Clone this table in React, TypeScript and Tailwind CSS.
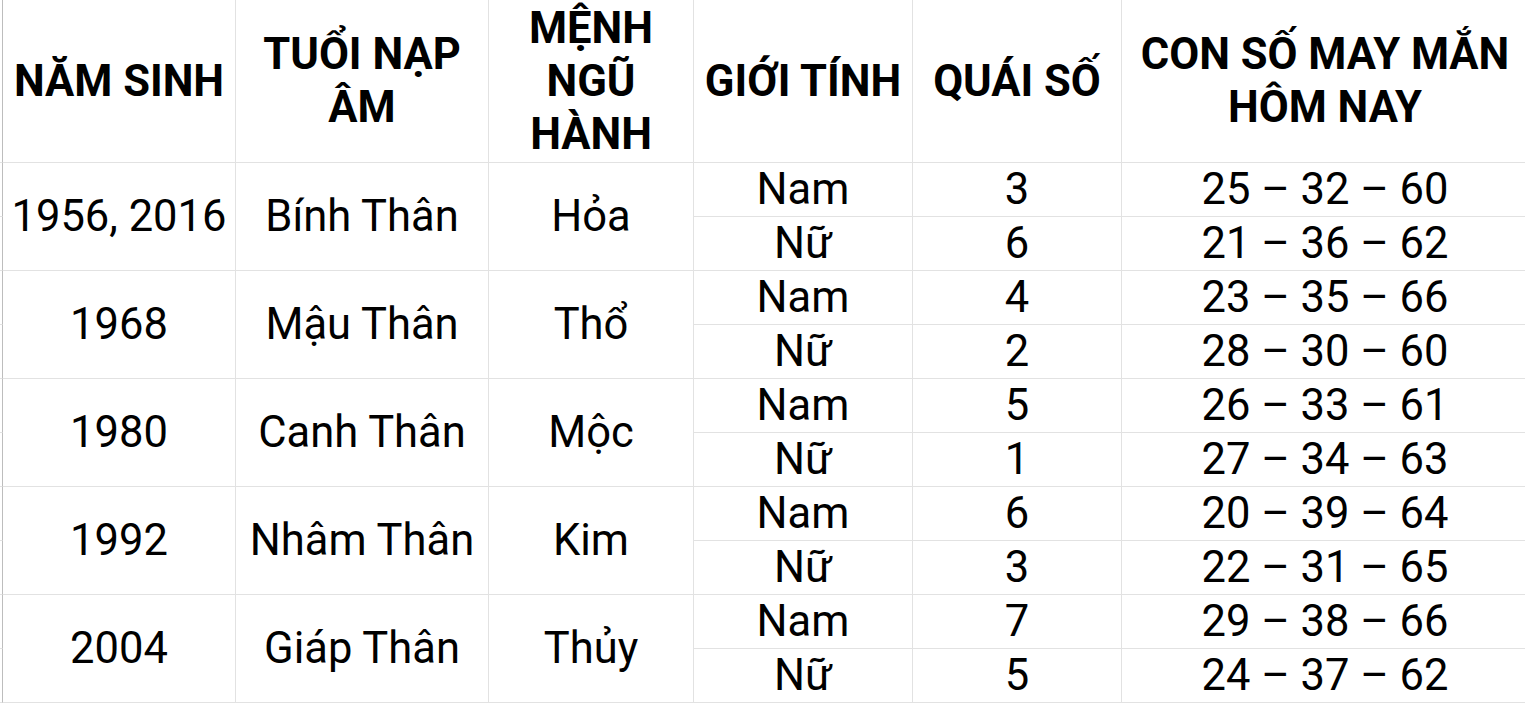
import React from "react";

type Group = {
  year: string;
  tuoi: string;
  menh: string;
  rows: { gender: string; quai: string; lucky: string }[];
};

const groups: Group[] = [
  {
    year: "1956, 2016",
    tuoi: "Bính Thân",
    menh: "Hỏa",
    rows: [
      { gender: "Nam", quai: "3", lucky: "25 – 32 – 60" },
      { gender: "Nữ", quai: "6", lucky: "21 – 36 – 62" },
    ],
  },
  {
    year: "1968",
    tuoi: "Mậu Thân",
    menh: "Thổ",
    rows: [
      { gender: "Nam", quai: "4", lucky: "23 – 35 – 66" },
      { gender: "Nữ", quai: "2", lucky: "28 – 30 – 60" },
    ],
  },
  {
    year: "1980",
    tuoi: "Canh Thân",
    menh: "Mộc",
    rows: [
      { gender: "Nam", quai: "5", lucky: "26 – 33 – 61" },
      { gender: "Nữ", quai: "1", lucky: "27 – 34 – 63" },
    ],
  },
  {
    year: "1992",
    tuoi: "Nhâm Thân",
    menh: "Kim",
    rows: [
      { gender: "Nam", quai: "6", lucky: "20 – 39 – 64" },
      { gender: "Nữ", quai: "3", lucky: "22 – 31 – 65" },
    ],
  },
  {
    year: "2004",
    tuoi: "Giáp Thân",
    menh: "Thủy",
    rows: [
      { gender: "Nam", quai: "7", lucky: "29 – 38 – 66" },
      { gender: "Nữ", quai: "5", lucky: "24 – 37 – 62" },
    ],
  },
];

const cell =
  "flex items-center justify-center text-center border-r border-b border-[#e2e2e2] whitespace-nowrap";
const edge = "border-r border-b border-b-[#e2e2e2] border-r-[#bdbdbd]";

function Head({ children }: { children: React.ReactNode }) {
  return <div className={`${cell} font-bold leading-[53px]`}>{children}</div>;
}

export default function App() {
  return (
    <div className="w-[1525px] h-[705px] overflow-hidden bg-white text-black font-['Roboto',sans-serif] text-[43.5px]">
      <div className="grid grid-cols-[3px_233px_253px_205px_219px_209px_407px] grid-rows-[163px_repeat(10,54px)]">
        {/* header */}
        <div className={edge} />
        <Head>NĂM SINH</Head>
        <Head>
          TUỔI NẠP
          <br />
          ÂM
        </Head>
        <Head>
          MỆNH
          <br />
          NGŨ
          <br />
          HÀNH
        </Head>
        <Head>GIỚI TÍNH</Head>
        <Head>QUÁI SỐ</Head>
        <Head>
          CON SỐ MAY MẮN
          <br />
          HÔM NAY
        </Head>

        {groups.map((g) => (
          <React.Fragment key={g.year}>
            <div className={edge} />
            <div className={`${cell} row-span-2`}>{g.year}</div>
            <div className={`${cell} row-span-2`}>{g.tuoi}</div>
            <div className={`${cell} row-span-2`}>{g.menh}</div>
            <div className={cell}>{g.rows[0].gender}</div>
            <div className={cell}>{g.rows[0].quai}</div>
            <div className={cell}>{g.rows[0].lucky}</div>
            <div className={edge} />
            <div className={cell}>{g.rows[1].gender}</div>
            <div className={cell}>{g.rows[1].quai}</div>
            <div className={cell}>{g.rows[1].lucky}</div>
          </React.Fragment>
        ))}
      </div>
    </div>
  );
}
